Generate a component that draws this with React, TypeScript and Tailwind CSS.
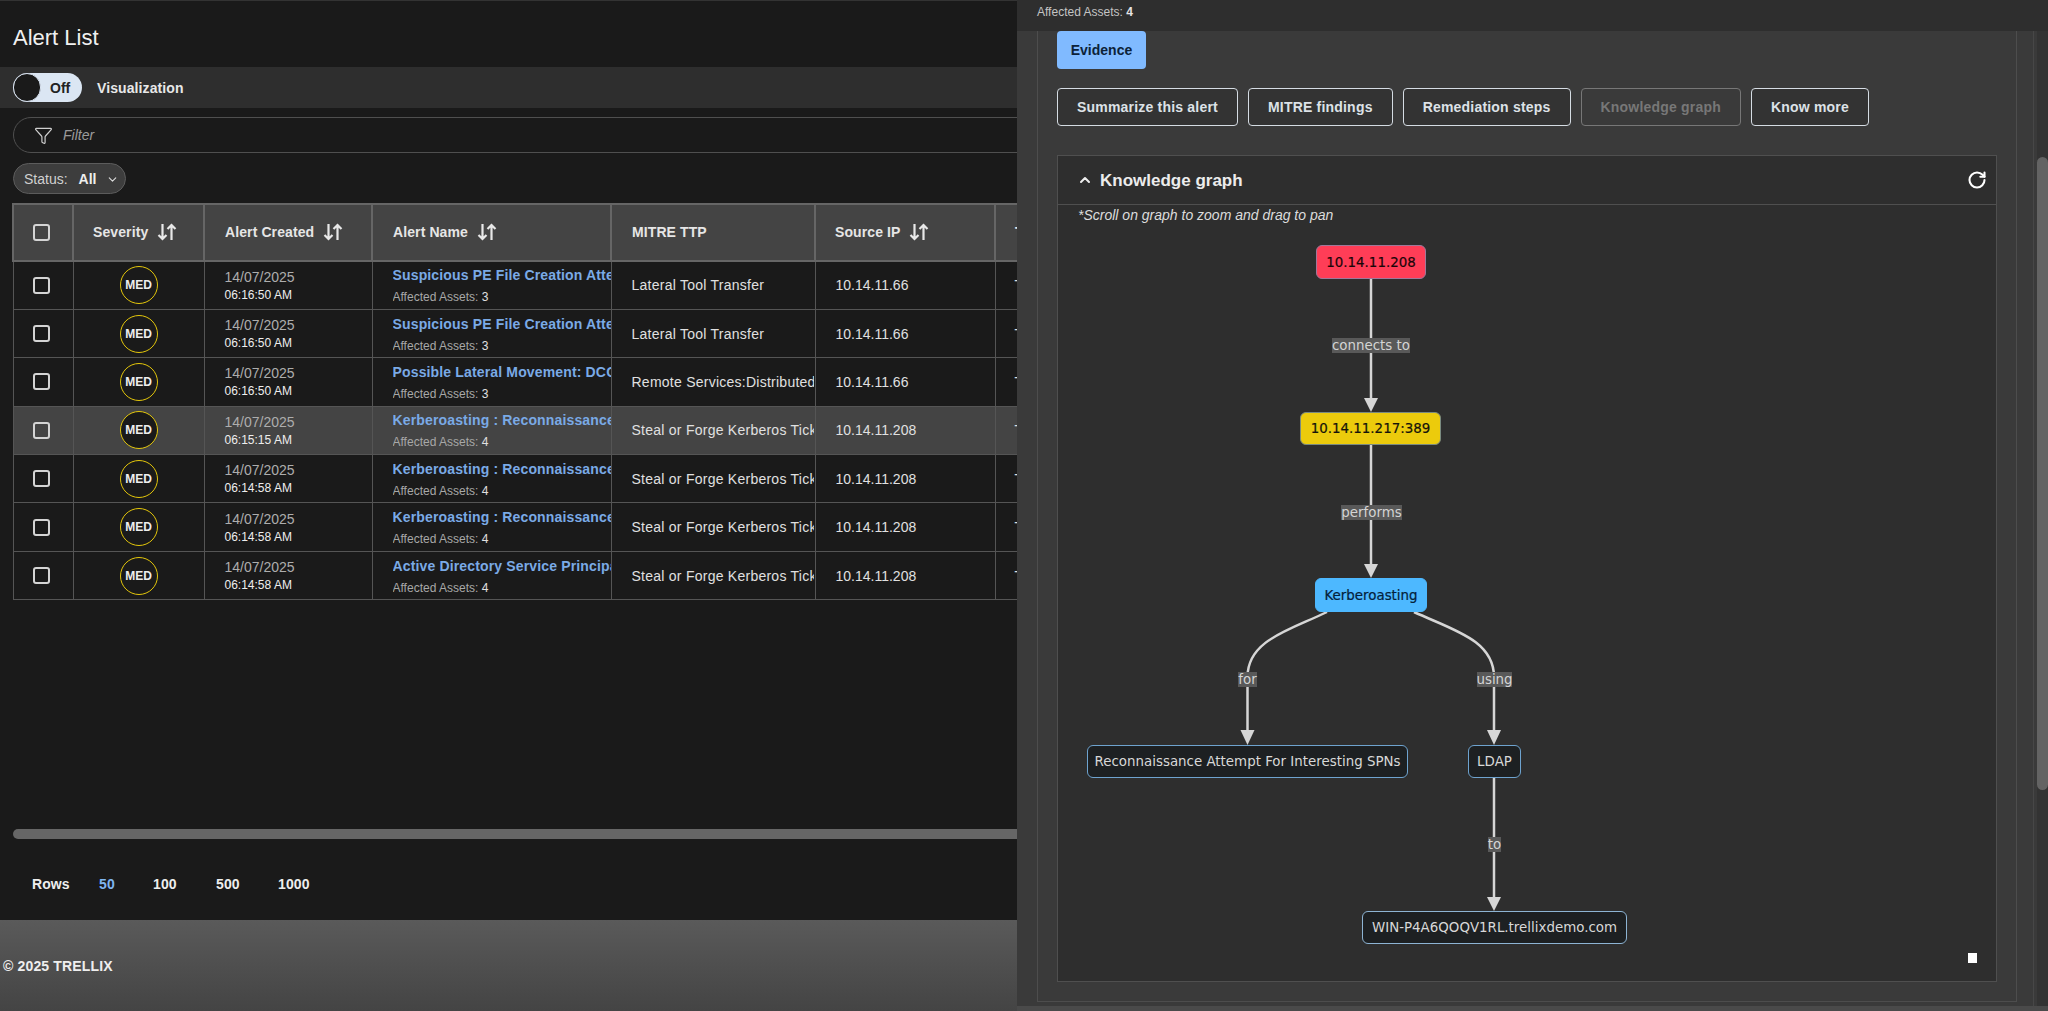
import React from "react";
import { ChevronDown, ChevronUp, Filter, RotateCw } from "lucide-react";

type Alert = {
  name: string;
  assets: number;
  time: string;
  ttp: string;
  ip: string;
  active?: boolean;
};

const alerts: Alert[] = [
  { name: "Suspicious PE File Creation Attempt via SMB", assets: 3, time: "06:16:50 AM", ttp: "Lateral Tool Transfer", ip: "10.14.11.66" },
  { name: "Suspicious PE File Creation Attempt via SMB", assets: 3, time: "06:16:50 AM", ttp: "Lateral Tool Transfer", ip: "10.14.11.66" },
  { name: "Possible Lateral Movement: DCOM Execution", assets: 3, time: "06:16:50 AM", ttp: "Remote Services:Distributed Component", ip: "10.14.11.66" },
  { name: "Kerberoasting : Reconnaissance Attempt", assets: 4, time: "06:15:15 AM", ttp: "Steal or Forge Kerberos Tickets", ip: "10.14.11.208", active: true },
  { name: "Kerberoasting : Reconnaissance Attempt", assets: 4, time: "06:14:58 AM", ttp: "Steal or Forge Kerberos Tickets", ip: "10.14.11.208" },
  { name: "Kerberoasting : Reconnaissance Attempt", assets: 4, time: "06:14:58 AM", ttp: "Steal or Forge Kerberos Tickets", ip: "10.14.11.208" },
  { name: "Active Directory Service Principal Enumeration", assets: 4, time: "06:14:58 AM", ttp: "Steal or Forge Kerberos Tickets", ip: "10.14.11.208" },
];

const SortIcon = () => (
  <svg width="22" height="22" viewBox="0 0 22 22" fill="none" stroke="#e8e8e8" strokeWidth="2.2" className="ml-2 shrink-0">
    <path d="M6.500 3v15M2.500 14 6.500 18l4-4" />
    <path d="M15.500 19V4M11.500 8l4-4 4 4" />
  </svg>
);

const Checkbox = () => <div className="ml-[19px] h-[17px] w-[17px] rounded-[3px] border-2 border-[#d4d4d4]" />;

const HeadCell = ({ label, sort, className }: { label: string; sort?: boolean; className: string }) => (
  <th className={"border-2 border-[#666] pb-[2px] pr-2 text-left " + className}>
    <div className="flex items-center text-sm font-bold tracking-[0.1px] text-[#e6e6e6]">
      {label}
      {sort && <SortIcon />}
    </div>
  </th>
);

const ActionButton = ({ label, disabled }: { label: string; disabled?: boolean }) => (
  <button
    className={
      disabled
        ? "h-[38px] rounded border border-[#777] px-[19px] text-sm font-bold tracking-[0.2px] text-[#777]"
        : "h-[38px] rounded border border-[#d5dce3] bg-[#333] px-[19px] text-sm font-bold tracking-[0.2px] text-[#dde2e7]"
    }
  >
    {label}
  </button>
);

const EdgeLabel = ({ className, text }: { className: string; text: string }) => (
  <div className={"absolute flex h-[15px] items-center justify-center bg-[#595959] pt-px text-[13.400px] whitespace-nowrap text-[#d4d4d4] " + className}>
    {text}
  </div>
);

const GraphNode = ({ className, text }: { className: string; text: string }) => (
  <div className={"absolute flex items-center justify-center rounded-md border pt-[2px] text-[13.400px] whitespace-nowrap " + className}>
    {text}
  </div>
);

function KnowledgeGraph() {
  return (
    <div className="relative flex-1" style={{ fontFamily: '"DejaVu Sans", sans-serif' }}>
      <div className="absolute left-5 top-0 text-sm italic leading-5 text-[#dcdcdc]" style={{ fontFamily: '"Liberation Sans", Arial, sans-serif' }}>
        *Scroll on graph to zoom and drag to pan
      </div>
      <svg className="absolute inset-0 h-full w-full" fill="none" stroke="#d6d6d6" strokeWidth="2.500">
        <path d="M313 74V195" />
        <path d="M313 240V362" />
        <path d="M269 407C232 425 189.500 435 189.500 472V527" />
        <path d="M356 407C395 425 436 435 436 472V527" />
        <path d="M436 573V694" />
        <g fill="#d6d6d6" stroke="none">
          <path d="M306 193h14l-7 14z" />
          <path d="M306 359h14l-7 14z" />
          <path d="M182.500 525h14l-7 15z" />
          <path d="M429 525h14l-7 15z" />
          <path d="M429 692h14l-7 14z" />
        </g>
      </svg>
      <GraphNode className="left-[258px] top-[40px] h-[34px] w-[110px] border-[#a0789a] bg-[#ff3d57] text-[#1a0508] [-webkit-text-stroke:0.2px]" text="10.14.11.208" />
      <GraphNode className="left-[242px] top-[207px] h-[33px] w-[141px] border-[#7a8a80] bg-[#eccb0c] text-[#15130a] [-webkit-text-stroke:0.2px]" text="10.14.11.217:389" />
      <GraphNode className="left-[257px] top-[373px] h-[34px] w-[112px] border-[#4db8ff] bg-[#4db8ff] text-[#04213a] [-webkit-text-stroke:0.2px]" text="Kerberoasting" />
      <GraphNode className="left-[29px] top-[540px] h-[33px] w-[321px] border-[#6ea3cf] bg-[#1d2022] text-[#d8d8d8]" text="Reconnaissance Attempt For Interesting SPNs" />
      <GraphNode className="left-[410px] top-[540px] h-[33px] w-[53px] border-[#6ea3cf] bg-[#1d2022] text-[#d8d8d8]" text="LDAP" />
      <GraphNode className="left-[304px] top-[706px] h-[33px] w-[265px] border-[#8db4d4] bg-[#1d2022] text-[#d8d8d8]" text="WIN-P4A6QOQV1RL.trellixdemo.com" />
      <EdgeLabel className="left-[274px] top-[133px] w-[78px]" text="connects to" />
      <EdgeLabel className="left-[283px] top-[300px] w-[61px]" text="performs" />
      <EdgeLabel className="left-[180px] top-[467px] w-[19px]" text="for" />
      <EdgeLabel className="left-[419px] top-[467px] w-[35px]" text="using" />
      <EdgeLabel className="left-[430px] top-[632px] w-[13px]" text="to" />
      <div className="absolute left-[910px] top-[748px] h-[10px] w-[9px] bg-white" />
    </div>
  );
}

function AlertPanel() {
  return (
    <aside className="absolute right-0 top-0 flex h-full w-[1031px] flex-col bg-[#3a3a3a]">
      <div className="flex h-[31px] shrink-0 items-center bg-[#2e2e2e] pb-2 pl-5 text-xs text-[#c4c4c4]">
        Affected Assets:&nbsp;<span className="font-semibold text-[#e4e4e4]">4</span>
      </div>
      <div className="flex min-h-0 flex-1">
        <div className="mb-[4px] ml-5 flex min-w-0 flex-1 flex-col border-x border-b border-[#4d4d4d] pb-[19px] pl-[19px] pr-[19px]">
          <div>
            <button className="h-[38px] w-[89px] rounded bg-[#80baff] text-sm font-bold text-[#0c2238]">Evidence</button>
          </div>
          <div className="mt-[19px] flex gap-[10px]">
            <ActionButton label="Summarize this alert" />
            <ActionButton label="MITRE findings" />
            <ActionButton label="Remediation steps" />
            <ActionButton label="Knowledge graph" disabled />
            <ActionButton label="Know more" />
          </div>
          <div className="mt-[29px] flex min-h-0 flex-1 flex-col border border-[#4f4f4f] bg-[#2e2e2e]">
            <div className="flex h-[49px] shrink-0 items-center border-b border-[#4f4f4f] pl-[19px] pr-[9px]">
              <ChevronUp size={16} strokeWidth={3} className="text-[#eee]" />
              <span className="ml-[7px] pt-[2px] text-[17px] font-bold text-[#ececec]">Knowledge graph</span>
              <RotateCw size={20} strokeWidth={2.5} className="ml-auto text-white" />
            </div>
            <KnowledgeGraph />
          </div>
        </div>
        <div className="w-[17px] shrink-0 border-r border-[#474747]" />
        <div className="w-[3px] shrink-0" />
        <div className="w-[11px] shrink-0 bg-[#333] pt-[126px]">
          <div className="h-[633px] rounded-md bg-[#636363]" />
        </div>
      </div>
      <div className="h-[5px] shrink-0 bg-[#4a4a4a]" />
    </aside>
  );
}

export default function App() {
  return (
    <div className="relative flex h-[1011px] w-full flex-col overflow-hidden bg-[#1a1a1a] text-white" style={{ fontFamily: '"Liberation Sans", Arial, sans-serif' }}>
      <div className="h-px shrink-0 bg-[#333]" />
      <h1 className="flex h-[66px] shrink-0 items-center pl-[13px] pt-[6px] text-[22px] text-[#f0f0f0]">Alert List</h1>
      <div className="flex h-[41px] shrink-0 items-center bg-[#2e2e2e] pl-[13px]">
        <div className="flex h-[29px] w-[69px] items-center rounded-full bg-[#dbe6f3]">
          <div className="h-[29px] w-[28px] rounded-full border border-[#d8e2ef] bg-[#1a1a1a]" />
          <span className="ml-[9px] text-sm font-bold text-[#222]">Off</span>
        </div>
        <span className="ml-[15px] text-sm font-bold tracking-[0.1px] text-[#e8e8e8]">Visualization</span>
      </div>
      <div className="ml-[13px] mt-[9px] flex h-[36px] shrink-0 items-center rounded-l-full border border-[#4f4f4f] pl-[20px]">
        <Filter size={19} strokeWidth={1.5} className="text-[#d0d0d0]" />
        <span className="ml-[10px] text-sm italic text-[#9a9a9a]">Filter</span>
      </div>
      <div className="ml-[13px] mt-[10px] flex h-[31px] w-[113px] shrink-0 items-center rounded-full border border-[#5c5c5c] bg-[#3d3d3d] pl-[10px]">
        <span className="text-sm text-[#d0d0d0]">Status:</span>
        <span className="ml-[11px] text-sm font-bold text-[#eee]">All</span>
        <ChevronDown size={13} strokeWidth={2} className="ml-[10px] mt-[2px] text-[#ddd]" />
      </div>

      <div className="ml-[12px] mt-[9px] shrink-0 overflow-hidden">
        <table className="w-[1260px] table-fixed border-collapse">
          <colgroup>
            <col className="w-[60px]" />
            <col className="w-[131px]" />
            <col className="w-[168px]" />
            <col className="w-[239px]" />
            <col className="w-[204px]" />
            <col className="w-[180px]" />
            <col className="w-[278px]" />
          </colgroup>
          <thead>
            <tr className="h-[57px] bg-[#444]">
              <th className="border-2 border-[#666]">
                <Checkbox />
              </th>
              <HeadCell label="Severity" sort className="pl-[19px]" />
              <HeadCell label="Alert Created" sort className="pl-[20px]" />
              <HeadCell label="Alert Name" sort className="pl-[20px]" />
              <HeadCell label="MITRE TTP" className="pl-[20px]" />
              <HeadCell label="Source IP" sort className="pl-[19px]" />
              <HeadCell label="T" className="pl-[19px]" />
            </tr>
          </thead>
          <tbody>
            {alerts.map((a, i) => (
              <tr key={i} className={a.active ? "h-[48.400px] bg-[#444]" : "h-[48.400px]"}>
                <td className="border border-[#555]">
                  <Checkbox />
                </td>
                <td className="border border-[#555]">
                  <div className="mx-auto flex h-[38px] w-[38px] items-center justify-center rounded-full border-[1.5px] border-[#e3c60b] bg-[#1a1a1a] text-xs font-bold text-[#eee]">
                    MED
                  </div>
                </td>
                <td className="border border-[#555] pl-[20px]">
                  <div className="text-sm leading-[18px] text-[#adadad]">14/07/2025</div>
                  <div className="mt-px text-xs leading-[16px] text-[#eee]">{a.time}</div>
                </td>
                <td className="border border-[#555] pl-[20px]">
                  <div className="overflow-hidden">
                    <div className="text-sm font-bold leading-5 tracking-[0.15px] whitespace-nowrap text-[#7aaae6]">{a.name}</div>
                    <div className="mt-[4px] text-xs leading-4 whitespace-nowrap text-[#a8a8a8]">
                      Affected Assets: <span className="text-[#e0e0e0]">{a.assets}</span>
                    </div>
                  </div>
                </td>
                <td className="border border-[#555] pl-[20px]">
                  <div className="mr-px overflow-hidden text-sm tracking-[0.25px] whitespace-nowrap text-[#e0e0e0]">{a.ttp}</div>
                </td>
                <td className="border border-[#555] pl-[20px] text-sm text-[#e0e0e0]">{a.ip}</td>
                <td className="border border-[#555] pl-[19px] text-sm text-[#e0e0e0]">T</td>
              </tr>
            ))}
          </tbody>
        </table>
      </div>

      <div className="flex-1" />
      <div className="ml-[13px] h-[10px] shrink-0 rounded-l-md bg-[#666]" />
      <div className="flex h-[81px] shrink-0 items-center pt-[8px] pl-[32px] text-sm font-semibold tracking-[0.1px] text-[#eee]">
        <span className="w-[67px]">Rows</span>
        <span className="w-[54px] text-[#7fb5f0]">50</span>
        <span className="w-[63px]">100</span>
        <span className="w-[62px]">500</span>
        <span>1000</span>
      </div>
      <footer className="flex h-[91px] shrink-0 items-center bg-gradient-to-b from-[#5a5a5a] to-[#444] pl-[3px] text-sm font-bold tracking-[0.15px] text-[#eee]">
        © 2025 TRELLIX
      </footer>
      <AlertPanel />
    </div>
  );
}
